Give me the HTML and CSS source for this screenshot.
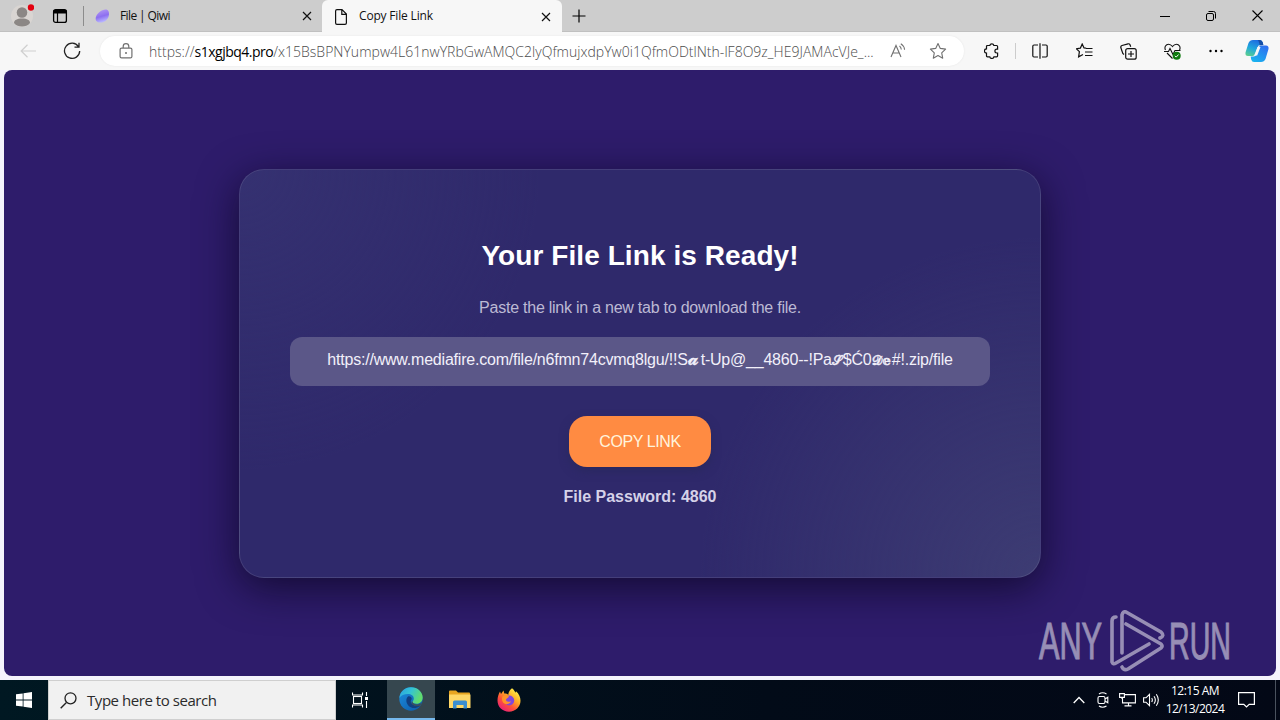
FILE: index.html
```html
<!DOCTYPE html>
<html lang="en">
<head>
    <meta charset="UTF-8">
    <title>Copy File Link</title>
    <link rel="stylesheet" href="styles.css">
</head>
<body>
<div class="desktop">

    <!-- tabs -->
    <div class="titlebar">
        <div class="slot w44 profile">
            <svg width="24" height="26" viewBox="0 0 24 26"><circle cx="12" cy="14" r="11" fill="#d9d5d2"/><circle cx="12" cy="10.500" r="5.300" fill="#8b8785"/><path d="M4 21c0-3 3-4.500 8-4.500s8 1.500 8 4.500c-2 2.800-5 3.500-8 3.500s-6-.7-8-3.500z" fill="#8b8785"/><circle cx="21" cy="5.500" r="3.200" fill="#e3000f"/></svg>
        </div>
        <div class="slot w32">
            <svg width="16" height="16" viewBox="0 0 16 16"><rect x="1.600" y="1.600" width="12.800" height="12.800" rx="2" fill="none" stroke="#000" stroke-width="1.300"/><path d="M1.500 2h13v3.500h-13z"/><path d="M5.500 5v9" stroke="#000" stroke-width="1.200"/></svg>
        </div>
        <div class="sep"></div>
        <div class="tab">
            <svg width="16" height="16" viewBox="0 0 16 16"><defs><linearGradient id="qiwi" x1="0" y1="0" x2="0.3" y2="1"><stop offset="0" stop-color="#b9a0f4"/><stop offset=".6" stop-color="#8d6ff0"/><stop offset="1" stop-color="#b7b4ff"/></linearGradient></defs><path d="M14.600 3.500c1.200 3.500-.3 7.700-3.600 9.800-3 1.900-7.200 1.800-8.800-.6C.8 10 2.500 6.200 5.500 4 8.500 1.500 13.400.2 14.600 3.500z" fill="url(#qiwi)"/></svg>
            <span class="tab-title t1">File | Qiwi</span>
            <svg class="x" width="10" height="10" viewBox="0 0 10 10"><path d="M1 1l8 8M9 1l-8 8"/></svg>
        </div>
        <div class="tab active">
            <svg width="16" height="16" viewBox="0 0 16 16"><path d="M2.600 2q0-1.400 1.400-1.400h5l4.400 4.400v9q0 1.400-1.400 1.400h-8q-1.400 0-1.400-1.400zM8.800.8v4.500h4.500" fill="none" stroke="#111" stroke-width="1.200"/></svg>
            <span class="tab-title t2">Copy File Link</span>
            <svg class="x" width="10" height="10" viewBox="0 0 10 10"><path d="M1 1l8 8M9 1l-8 8"/></svg>
        </div>
        <div class="slot w34">
            <svg width="14" height="14" viewBox="0 0 14 14"><path d="M7 .5v13M.5 7h13" stroke="#000" stroke-width="1.200"/></svg>
        </div>
        <div class="win-buttons">
            <div class="slot w46"><svg width="10" height="10" viewBox="0 0 10 10"><path d="M0 5.500h10" stroke="#000"/></svg></div>
            <div class="slot w46"><svg width="10" height="10" viewBox="0 0 10 10"><g fill="none" stroke="#000"><rect x=".5" y="2.500" width="7" height="7" rx="1.500"/><path d="M2.500.5h5q2 0 2 2v5"/></g></svg></div>
            <div class="slot w46"><svg width="11" height="11" viewBox="0 0 11 11"><path d="M.5.5l10 10M10.500.5l-10 10" stroke="#000" stroke-width="1.100"/></svg></div>
        </div>
    </div>

    <!-- address row -->
    <div class="toolbar">
        <div class="slot w56">
            <svg width="16" height="14" viewBox="0 0 16 14"><path d="M16 7H1M7.500.8L1.200 7l6.300 6.200" fill="none" stroke="#cfcfcf" stroke-width="1.200"/></svg>
        </div>
        <div class="slot w32">
            <svg width="18" height="18" viewBox="0 0 18 18"><path d="M15.500 4.700A7.600 7.600 0 1 0 16.700 9M16 .8v4.400h-4.500" fill="none" stroke="#222" stroke-width="1.300"/></svg>
        </div>
        <div class="address">
            <svg class="lock" width="14" height="16" viewBox="0 0 14 16"><g fill="none" stroke="#707070" stroke-width="1.200"><rect x="1.100" y="5.100" width="11.800" height="9.800" rx="1.500"/><path d="M4.200 5V3.500a2.800 2.800 0 0 1 5.600 0V5"/></g><circle cx="7" cy="10" r="1" fill="#707070"/></svg>
            <span class="url">https://<b>s1xgjbq4.pro</b>/x15BsBPNYumpw4L61nwYRbGwAMQC2lyQfmujxdpYw0i1QfmODtlNth-lF8O9z_HE9JAMAcVJe_...</span>
            <svg class="aloud" width="16" height="16" viewBox="0 0 16 16"><g fill="none" stroke="#707070" stroke-width="1.100"><path d="M1 14L6 2.500 11 14M2.800 10h6.500M9.500 3q1.600 1.200 1.800 3.500M10.800.8q3.400 2 3.800 6"/></g></svg>
            <svg class="star" width="18" height="18" viewBox="0 0 18 18"><path d="M9 1.500l2.300 4.900 5.300.7-3.900 3.700 1 5.400L9 13.600l-4.700 2.600 1-5.400L1.400 7.100l5.300-.7z" fill="none" stroke="#707070" stroke-width="1.100" stroke-linejoin="round"/></svg>
        </div>
        <div class="slot w56">
            <svg width="16" height="16" viewBox="0 0 16 16"><path d="M5.800 2.500a2.100 2.100 0 0 1 4.100 0h2.700q1 0 1 1v2.700h-.8a1.900 1.900 0 0 0 0 3.800h.8v2.800q0 1-1 1H9.900a2.100 2.100 0 0 1-4.100 0H3.500q-1 0-1-1v-2.700a2.100 2.100 0 0 1 0-4.200V3.500q0-1 1-1z" fill="none" stroke="#111" stroke-width="1.200"/></svg>
        </div>
        <div class="tool-sep"></div>
        <div class="slot w44">
            <svg width="16" height="16" viewBox="0 0 16 16"><path d="M6 2H2Q.8 2 .8 3.200v9.600Q.8 14 2 14h4M10 2h4q1.200 0 1.200 1.200v9.600Q15.200 14 14 14h-4M8 .3v15.400" fill="none" stroke="#111" stroke-width="1.200"/></svg>
        </div>
        <div class="slot w44">
            <svg width="17" height="16" viewBox="0 0 17 16"><path d="M10 5.200L8 5 6.200 1 4.400 5.100l-4 .6 3 3-.8 5.200L7 11.500M10 5.500h6.500M9 9h7.500M9 12.500h7.500M6.200 1l2 4.200h2" fill="none" stroke="#111" stroke-width="1.200"/></svg>
        </div>
        <div class="slot w44">
            <svg width="17" height="17" viewBox="0 0 17 17"><g fill="none" stroke="#111" stroke-width="1.200"><rect x="5.700" y="5.700" width="10.500" height="10.500" rx="2"/><path d="M11 8v6M8 11h6M4 11.500L2.800 10.500.8 4.500Q.5 3 2 2.500l6-1.700q1.500-.3 2 1l.7 2"/></g></svg>
        </div>
        <div class="slot w44">
            <svg width="17" height="17" viewBox="0 0 17 17"><g fill="none" stroke="#111" stroke-width="1.100"><path d="M1.500 7C0 4 2 1.200 4.500 1.200c2 0 3 1 4 2.300 1-1.300 2-2.300 4-2.300C15 1.200 17 4 15.500 7M3 10l5.500 5.500"/><path d="M0 8.500h4.500L6 5.500l3 6 2-4h5.500"/></g><circle cx="12.700" cy="12.700" r="4" fill="#0f7b0f"/><path d="M10.900 12.800l1.300 1.300 2.400-2.600" fill="none" stroke="#fff"/></svg>
        </div>
        <div class="slot w44">
            <svg width="14" height="4" viewBox="0 0 14 4"><circle cx="1.500" cy="2" r="1.200"/><circle cx="7" cy="2" r="1.200"/><circle cx="12.500" cy="2" r="1.200"/></svg>
        </div>
        <div class="slot w40">
            <svg width="24" height="24" viewBox="0 0 24 24"><defs><linearGradient id="cpA" x1="0.500" y1="0" x2="0.100" y2="1"><stop offset="0" stop-color="#1d6fe0"/><stop offset=".5" stop-color="#20a8dc"/><stop offset="1" stop-color="#5fd08b"/></linearGradient><linearGradient id="cpB" x1="0.800" y1="0" x2="0.200" y2="1"><stop offset="0" stop-color="#2f6ff0"/><stop offset="1" stop-color="#19b4ef"/></linearGradient></defs><path d="M8 1h7q2 0 2.800 2.500L18.300 6h-3q-2 0-2.600 2l-2.500 7q-.7 2-2.700 2H3Q0 17 .5 13.500L3.500 4Q4.800 1 8 1z" fill="url(#cpA)"/><path d="M16 23H9q-2 0-2.800-2.500L5.700 17.500h3q2 0 2.600-2l2.500-7q.7-2 2.700-2H21q3 0 2.500 3.500L20.500 20q-1.300 3-4.500 3z" fill="url(#cpB)"/><path d="M14.700 6.500q1-.5 3.600-.5L17.800 3.500Q17 1 15 1h-2.500q1.500.5 2.200 5.500z" fill="#154ea6"/><path d="M12.500 8h3l-3.300 8.500h-3z" fill="#f7f7f7"/></svg>
        </div>
    </div>

    <!-- page -->
    <div class="frame">
        <div class="page">
            <div class="card">
                <h1>Your File Link is Ready!</h1>
                <p class="hint">Paste the link in a new tab to download the file.</p>
                <div class="link-box"><span class="link">https://www.mediafire.com/file/n6fmn74cvmq8lgu/!!S<i class="sc sm">𝓪</i>t-Up@__4860--!Pa<i class="sc">𝓢</i>$Ć0<i class="sc">𝓓</i><i class="sc ds">𝕖</i>#!.zip/file</span></div>
                <button class="copy">COPY LINK</button>
                <p class="password">File Password: 4860</p>
            </div>
            <svg class="watermark" width="200" height="64" viewBox="0 0 200 64">
                <text transform="translate(1 50) scale(.59 1)">ANY</text>
                <g fill="none" stroke="#fff" stroke-width="3.600" stroke-linejoin="round" stroke-linecap="round">
                    <path d="M78 8q-4 0-4 4v41q1 3 4 1l33-19"/>
                    <path d="M84 44V6q1-4 4-3l35 20q4 4-1 6"/>
                    <path d="M88 15l35 20q2 2 0 4L90 60q-4 2-6-2"/>
                </g>
                <text transform="translate(131 50) scale(.55 1)">RUN</text>
            </svg>
        </div>
    </div>

    <!-- taskbar -->
    <div class="taskbar">
        <div class="slot w48">
            <svg width="16" height="16" viewBox="0 0 16 16"><path d="M0 2.300L6.700 1.400v6.200H0zM7.500 1.300L16 0v7.600H7.500zM0 8.400h6.700v6.200L0 13.700zM7.500 8.400H16V16l-8.500-1.300z" fill="#fff"/></svg>
        </div>
        <div class="search">
            <svg width="17" height="17" viewBox="0 0 17 17"><path d="M6.200 10.800L.7 16.300" stroke="#222" stroke-width="1.400"/><circle cx="10.500" cy="6.300" r="5.500" fill="none" stroke="#222" stroke-width="1.300"/></svg>
            <span>Type here to search</span>
        </div>
        <div class="slot w51 task-view">
            <svg width="17" height="16" viewBox="0 0 17 16"><g fill="none" stroke="#fff" stroke-width="1.100"><path d="M.5.5v2.500h10V.5M.5 15.500V13h10v2.500M14.500 0v4M14.500 9v7"/><rect x="1.500" y="4.500" width="8" height="7"/></g><path d="M13 5h3v3h-3z" fill="#fff"/></svg>
        </div>
        <div class="slot w48 running">
            <svg width="24" height="24" viewBox="0 0 24 24"><defs><linearGradient id="eg1" x1="0" y1="0" x2="1" y2="0.400"><stop offset="0" stop-color="#2a9fe0"/><stop offset=".5" stop-color="#34c3d5"/><stop offset="1" stop-color="#62dc6c"/></linearGradient><linearGradient id="eg2" x1="0" y1="0" x2="1" y2="1"><stop offset="0" stop-color="#1d8fe0"/><stop offset="1" stop-color="#0c58a6"/></linearGradient></defs><circle cx="12" cy="12" r="11.700" fill="url(#eg2)"/><path d="M.4 11C1 4.500 6 .3 12 .3c7 0 11.700 5 11.700 10.200 0 3.800-2.700 6.300-6 6.300-2.700 0-4.200-1-4.200-2 0-.6 1.300-1.200 1.300-3.300C14.800 8.700 12 7 9 7 5 7 2 8.500.4 11z" fill="url(#eg1)"/><path d="M9 9.500c-2.500 2.300-2 7 1 9.700 3.500 3 8.500 1.800 11.900-.8-2 .8-6.500 1-9-1.600C11 14.800 12 13 12.800 12 12.500 10 11 9 9 9.500z" fill="#123f80"/><path d="M13.500 14.800c0 1.500 2 2.600 4.500 2.600 2 0 4-.8 5-2.200-.3 1.300-.8 2.500-1.600 3.600-2 .7-5.500.9-8-1.200-1.200-1.200-1-2-.4-3.500z" fill="#3c4f59"/></svg>
        </div>
        <div class="slot w49">
            <svg width="22" height="20" viewBox="0 0 22 20"><path d="M0 1.500Q0 .5 1 .5h6L9 2.500h11q1 0 1 1V18H0z" fill="#e8a520"/><path d="M0 4.500h21.500V18H0z" fill="#ffd766"/><path d="M4 18.500V12q0-1.500 1.500-1.500h11Q18 10.500 18 12v6.500h-3.500V15h-7v3.500z" fill="#3b8ed0"/></svg>
        </div>
        <div class="slot w49">
            <svg width="24" height="24" viewBox="0 0 24 24"><defs><linearGradient id="ff" x1="0.850" y1="0.100" x2="0.200" y2="0.950"><stop offset="0" stop-color="#fff04a"/><stop offset=".35" stop-color="#ffab24"/><stop offset=".65" stop-color="#ff5238"/><stop offset="1" stop-color="#e91e78"/></linearGradient></defs><path d="M15 .3c2 1.300 2.500 3 3.500 4.500l.5-1.500c3 2.500 4.500 6 4.500 9.500 0 6-5 10.900-11.500 10.900S.5 19 .5 12.500C.5 9 1.500 6 3 3.500L4 6l2.500-3.500.8 3c2 0 3 .3 4 1.200C11.500 4 13 1.500 15 .3z" fill="url(#ff)"/><circle cx="12.200" cy="12.500" r="5" fill="#8047dc"/><path d="M5.500 8.500c2-1.700 4-1.200 6.500-.3-.5 1.800-2.500 2-3 3.300-.3 2 2 3 5 1.800-1 2.700-4.500 4-7 2C5 13.700 4.500 11 5.500 8.500z" fill="#ff9428"/></svg>
        </div>
        <div class="tray">
            <div class="slot w24"><svg width="12" height="8" viewBox="0 0 12 8"><path d="M.7 7L6 1.500 11.300 7" fill="none" stroke="#fff" stroke-width="1.300"/></svg></div>
            <div class="slot w24"><svg width="14" height="16" viewBox="0 0 14 16"><g fill="none" stroke="#fff" stroke-width="1.100"><rect x="2" y="4.500" width="7" height="7" rx="1.500"/><path d="M9 7l2.800-1.800v5.600L9 9M3 2q3.500-2.500 7.500 0M3 14q3.500 2.500 7.500 0"/></g></svg></div>
            <div class="slot w24"><svg width="17" height="14" viewBox="0 0 17 14"><g fill="none" stroke="#fff" stroke-width="1.100"><path d="M6 1.600h10.400v8.300H3.500V5M5.500 12.900h7M9.500 10v3"/><path d="M.6.600h4.800v3.800H.6zM3 4v2"/></g></svg></div>
            <div class="slot w24"><svg width="17" height="14" viewBox="0 0 17 14"><g fill="none" stroke="#fff" stroke-width="1.100"><path d="M.6 4.800H3L6.500 1.300v11.400L3 9.200H.6zM8.700 5q1.300 2 0 4M11 3.200q2.700 3.800 0 7.600M13.300 1.300q4 5.700 0 11.400"/></g></svg></div>
            <div class="clock"><span class="time">12:15 AM</span><span class="date">12/13/2024</span></div>
            <div class="slot w40"><svg width="17" height="16" viewBox="0 0 17 16"><path d="M.6.600h15.800v11.800h-5.200L8.500 15 5.800 12.400H.6z" fill="none" stroke="#fff" stroke-width="1.200"/></svg></div>
            <div class="show-desktop"></div>
        </div>
    </div>
</div>
</body>
</html>
```
FILE: styles.css
```css
* {
    box-sizing: border-box;
}

body {
    margin: 0;
    overflow: hidden;
    font-family: "Open Sans", "Noto Sans", sans-serif;
}

.desktop {
    width: 1280px;
    height: 720px;
    display: flex;
    flex-direction: column;
    background: #f7f7f7;
}

svg {
    display: block;
    flex: none;
}

.slot {
    display: flex;
    flex: none;
    align-items: center;
    justify-content: center;
}

.w24 { width: 24px; }
.w32 { width: 32px; }
.w34 { width: 34px; }
.w40 { width: 38px; }
.w44 { width: 44px; }
.w46 { width: 46px; }
.w48 { width: 48px; }
.w49 { width: 49px; }
.w51 { width: 51px; }
.w56 { width: 56px; }

/* title bar */
.titlebar {
    height: 32px;
    flex: none;
    display: flex;
    align-items: stretch;
    background: #cdcdcd;
    border-bottom: 1px solid #c0c0c0;
}

.profile {
    padding-bottom: 2px;
}

.sep {
    width: 1px;
    height: 20px;
    margin: 6px 3px 0 7px;
    background: #8c8c8c;
}

.tab {
    width: 235px;
    display: flex;
    align-items: center;
    padding: 0 10px 0 7px;
    font-size: 12px;
    color: #111;
}

.tab.active {
    width: 240px;
    height: 33px;
    padding: 0 11px;
    background: #f7f7f7;
    border-radius: 6px 6px 0 0;
}

.tab-title {
    flex: 1;
    padding-left: 10px;
    white-space: nowrap;
}

.t1 {
    letter-spacing: -0.6px;
}

.t2 {
    letter-spacing: -0.18px;
    padding-bottom: 2px;
}

.x path {
    stroke: #111;
    stroke-width: 1.2;
}

.win-buttons {
    display: flex;
    margin-left: auto;
}

/* toolbar */
.toolbar {
    height: 38px;
    flex: none;
    display: flex;
    align-items: center;
}

.address {
    width: 864px;
    height: 30px;
    margin-left: 12px;
    display: flex;
    align-items: center;
    padding: 0 17px 0 19px;
    border-radius: 15px;
    background: #fff;
    box-shadow: 0 0 2px #e4e4e4;
}

.url {
    width: 727px;
    margin: 0 14px 0 16px;
    font-size: 14px;
    font-weight: 300;
    color: #4c4c4c;
    white-space: nowrap;
    letter-spacing: 0.02px;
}

.url b {
    font-weight: 400;
    color: #000;
    letter-spacing: -0.5px;
}

.star {
    margin-left: 23px;
}

.tool-sep {
    width: 1px;
    height: 16px;
    background: #ccc;
    margin: 0 2px 0 -5px;
}

/* page */
.frame {
    height: 610px;
    flex: none;
    padding: 0 4px 4px;
    background: #f5f3fc;
}

.page {
    position: relative;
    height: 606px;
    display: flex;
    align-items: center;
    justify-content: center;
    overflow: hidden;
    border-radius: 8px;
    background: #2e1c6b;
    font-family: "Liberation Sans", Arial, sans-serif;
}

.card {
    width: 802px;
    height: 409px;
    display: flex;
    flex-direction: column;
    align-items: center;
    padding: 70px 50px 0;
    border: 1px solid rgba(255, 255, 255, 0.1);
    border-radius: 25px;
    background: radial-gradient(circle at 100% 100%, #3d3c73 0, rgba(61, 60, 115, 0) 340px), radial-gradient(circle at 0 0, #353171 0, rgba(53, 49, 113, 0) 300px), #2f296b;
    box-shadow: 0 10px 40px rgba(8, 4, 28, 0.7);
}

h1 {
    margin: 0;
    font-size: 28px;
    line-height: 32px;
    letter-spacing: 0.08px;
    color: #fff;
}

.hint {
    margin: 26px 0 0;
    font-size: 16px;
    line-height: 20px;
    color: #bcb9d4;
    letter-spacing: -0.24px;
}

.link-box {
    width: 700px;
    height: 49px;
    margin-top: 19px;
    padding-top: 13px;
    border-radius: 12px;
    background: #5b5788;
    text-align: center;
    font-size: 16px;
    line-height: 20px;
    color: #f2f0fa;
    white-space: nowrap;
    letter-spacing: -0.21px;
}

.sc {
    font-family: "DejaVu Serif", "DejaVu Sans", serif;
    font-style: normal;
    font-size: 13px;
    line-height: 1;
    letter-spacing: 1px;
    -webkit-text-stroke: 0.4px #f2f0fa;
}

.sc.sm {
    font-size: 18px;
    letter-spacing: 2px;
}

.copy {
    width: 142px;
    height: 51px;
    margin-top: 30px;
    padding: 1px 0 0;
    border: 0;
    border-radius: 18px;
    background: #ff8b42;
    box-shadow: 0 4px 10px rgba(38, 40, 90, 0.7);
    color: #fff3dc;
    font: 16px "Liberation Sans", Arial, sans-serif;
    letter-spacing: -0.4px;
}

.password {
    margin: 20px 0 0;
    font-size: 16px;
    line-height: 20px;
    font-weight: bold;
    color: #d5d2e8;
}

/* overlay logo in the page corner */
.watermark {
    position: absolute;
    right: 38px;
    bottom: 3px;
    opacity: 0.5;
    overflow: visible;
}

.watermark text {
    font-family: "Liberation Sans", Arial, sans-serif;
    font-size: 52px;
    fill: #fff;
    stroke: #fff;
    stroke-width: 1px;
}

/* taskbar */
.taskbar {
    height: 40px;
    flex: none;
    display: flex;
    background: linear-gradient(90deg, #001822, #020b18 60%, #030816);
}

.search {
    width: 288px;
    display: flex;
    align-items: center;
    padding-left: 11px;
    gap: 10px;
    border: 1px solid #cfcfcf;
    background: #f1f1f1;
    font-size: 15px;
    color: #2b2b2b;
    white-space: nowrap;
}

.search span {
    letter-spacing: -0.45px;
}

.task-view {
    padding-right: 3px;
}

.running {
    background: #36474f;
    border-bottom: 2px solid #76b9ed;
}

.tray {
    display: flex;
    margin-left: auto;
}

.clock {
    width: 64px;
    display: flex;
    flex-direction: column;
    align-items: center;
    justify-content: center;
    font-size: 12px;
    line-height: 18px;
    color: #fff;
    letter-spacing: -0.5px;
    white-space: nowrap;
}

.show-desktop {
    width: 5px;
    margin-left: 10px;
    border-left: 1px solid #4a525e;
}
```
